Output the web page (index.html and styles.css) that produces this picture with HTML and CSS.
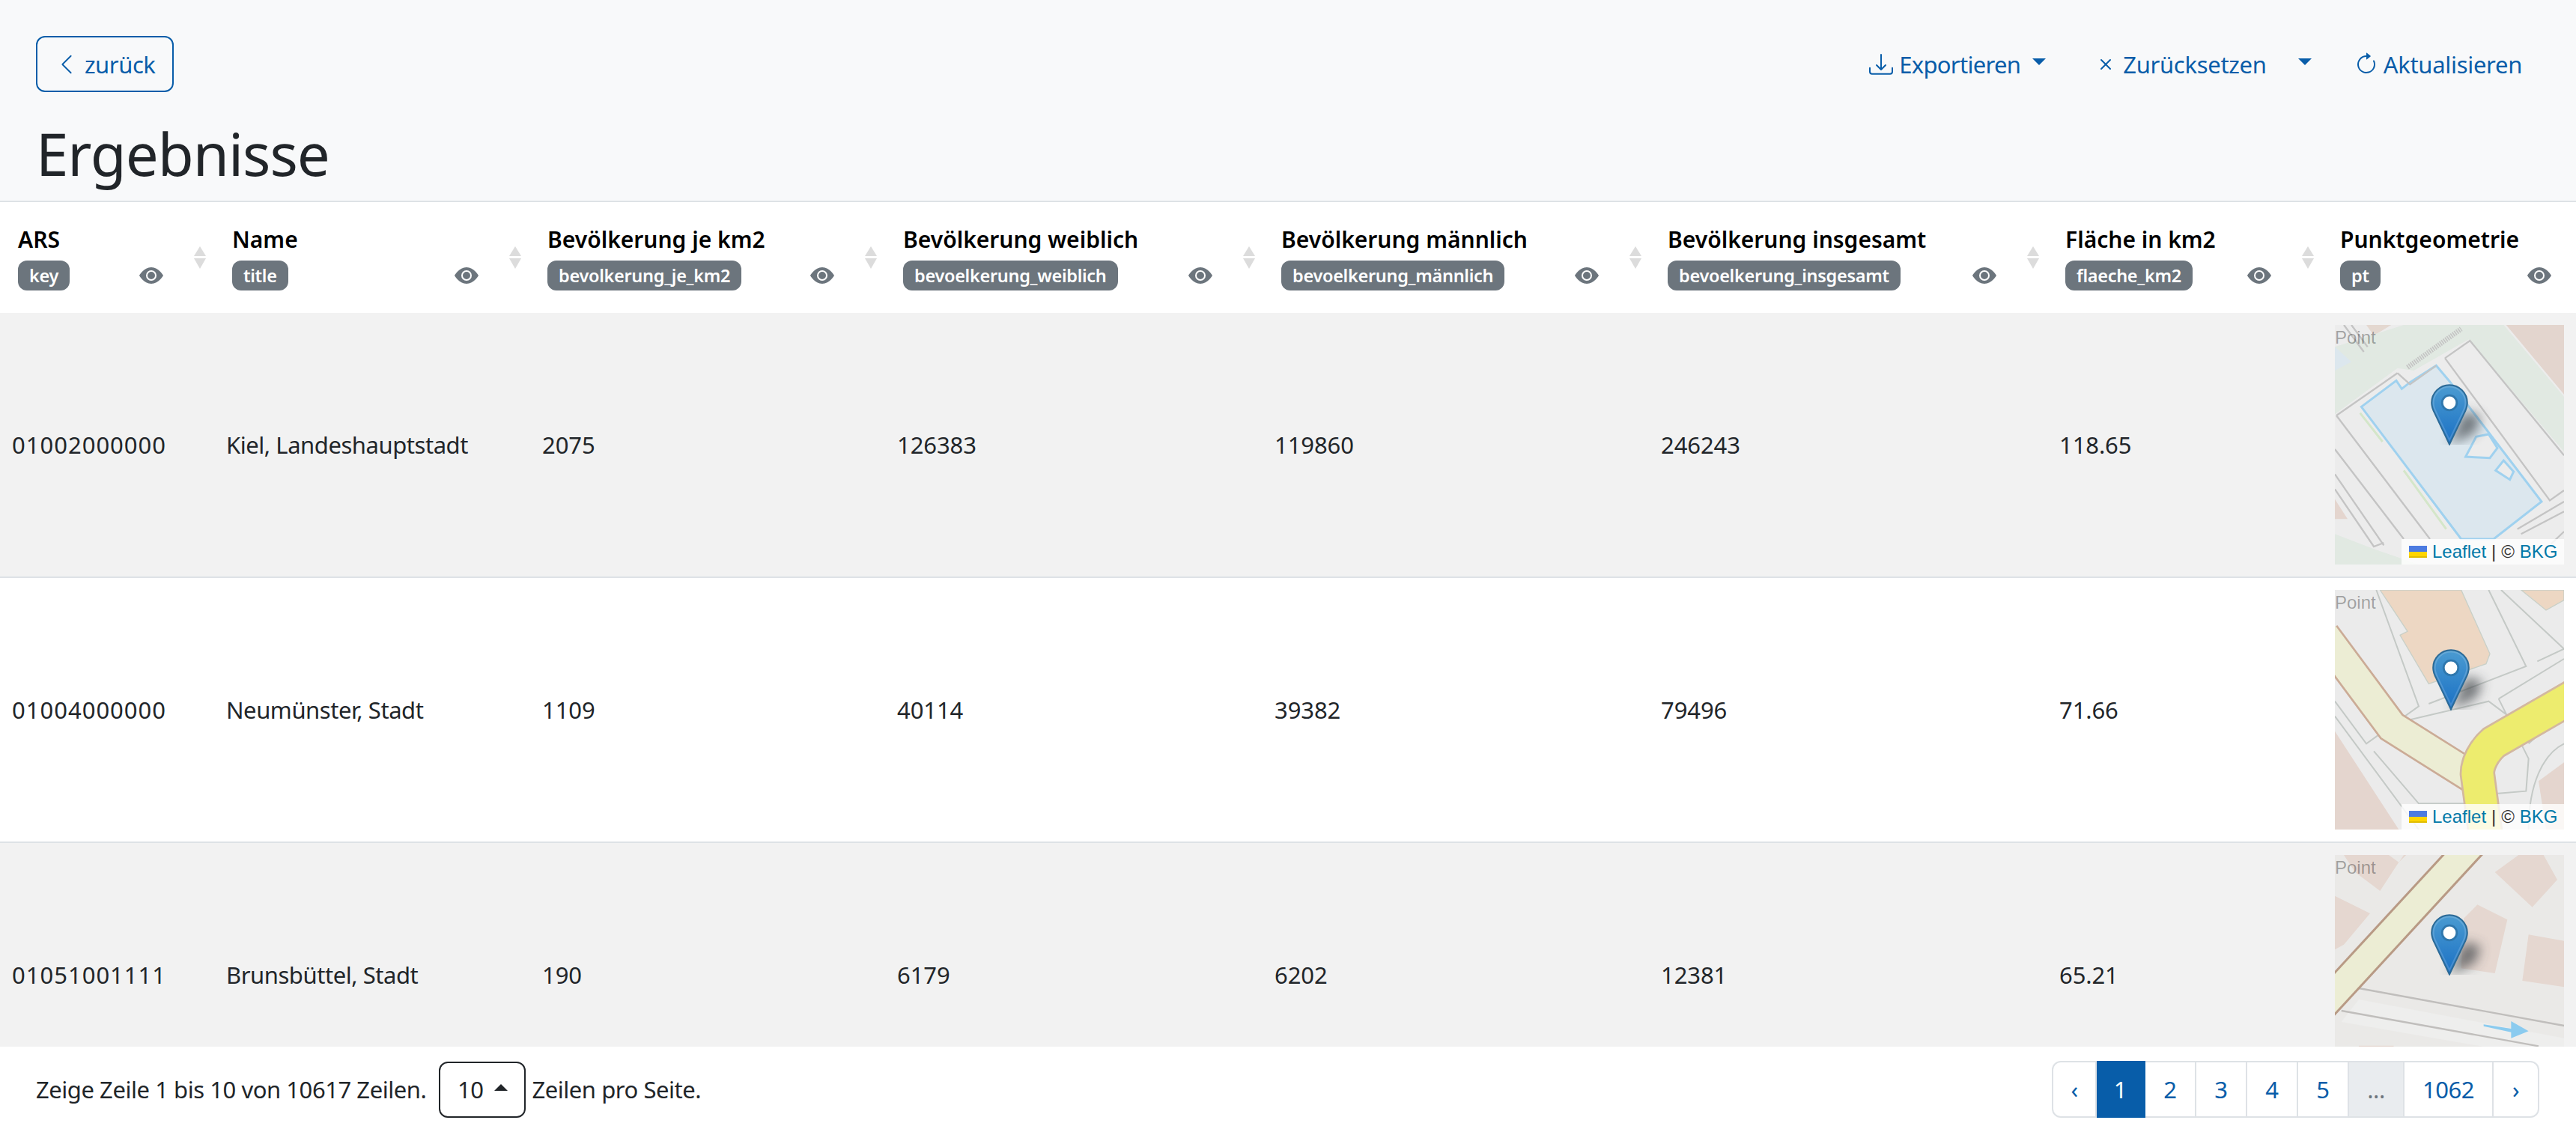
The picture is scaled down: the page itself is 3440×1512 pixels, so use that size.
FILE: index.html
```html
<!DOCTYPE html>
<html lang="de">
<head>
    <meta charset="UTF-8">
    <meta name="viewport" content="width=device-width, initial-scale=1.0">
    <title>Ergebnisse</title>
    <link rel="stylesheet" href="styles.css">
</head>
<body>
    <svg class="defs" width="0" height="0">
        <defs>
            <symbol id="i-eye" viewBox="0 0 16 16">
                <path d="M10.5 8a2.5 2.5 0 1 1-5 0 2.5 2.5 0 0 1 5 0z"/>
                <path d="M0 8s3-5.5 8-5.5S16 8 16 8s-3 5.5-8 5.5S0 8 0 8zm8 3.5a3.5 3.5 0 1 0 0-7 3.5 3.5 0 0 0 0 7z"/>
            </symbol>
            <symbol id="i-sort" viewBox="0 0 16 30">
                <path d="M8 0l8 13H0z" fill="#dcdcdc"/>
                <path d="M8 30L0 16h16z" fill="#dcdcdc"/>
            </symbol>
            <symbol id="i-chevron" viewBox="0 0 16 16">
                <path d="M11.354 1.646a.5.5 0 0 1 0 .708L5.707 8l5.647 5.646a.5.5 0 0 1-.708.708l-6-6a.5.5 0 0 1 0-.708l6-6a.5.5 0 0 1 .708 0z"/>
            </symbol>
            <symbol id="i-download" viewBox="0 0 16 16">
                <path d="M.5 9.9a.5.5 0 0 1 .5.5v2.5a1 1 0 0 0 1 1h12a1 1 0 0 0 1-1v-2.5a.5.5 0 0 1 1 0v2.5a2 2 0 0 1-2 2H2a2 2 0 0 1-2-2v-2.5a.5.5 0 0 1 .5-.5z"/>
                <path d="M7.646 11.854a.5.5 0 0 0 .708 0l3-3a.5.5 0 0 0-.708-.708L8.5 10.293V1.5a.5.5 0 0 0-1 0v8.793L5.354 8.146a.5.5 0 1 0-.708.708l3 3z"/>
            </symbol>
            <symbol id="i-x" viewBox="0 0 16 16">
                <path d="M4.646 4.646a.5.5 0 0 1 .708 0L8 7.293l2.646-2.647a.5.5 0 0 1 .708.708L8.707 8l2.647 2.646a.5.5 0 0 1-.708.708L8 8.707l-2.646 2.647a.5.5 0 0 1-.708-.708L7.293 8 4.646 5.354a.5.5 0 0 1 0-.708z"/>
            </symbol>
            <symbol id="i-refresh" viewBox="0 0 16 16">
                <path d="M8 3a5 5 0 1 0 4.546 2.914.5.5 0 0 1 .908-.417A6 6 0 1 1 8 2v1z"/>
                <path d="M8 4.466V.534a.25.25 0 0 1 .41-.192l2.36 1.966c.12.1.12.284 0 .384L8.41 4.658A.25.25 0 0 1 8 4.466z"/>
            </symbol>
            <symbol id="i-flag" viewBox="0 0 12 8">
                <path fill="#4C7BE1" d="M0 0h12v4H0z"/>
                <path fill="#FFD500" d="M0 4h12v3H0z"/>
                <path fill="#E0BC00" d="M0 7h12v1H0z"/>
            </symbol>
            <linearGradient id="pin-fill" x1="0" y1="0" x2="0" y2="1">
                <stop offset="0" stop-color="#4b9bd1"/>
                <stop offset="1" stop-color="#1a70c4"/>
            </linearGradient>
            <symbol id="i-pin" viewBox="0 0 25 41">
                <path d="M12.5.6C5.9.6.6 5.9.6 12.5c0 2.6 1 5.1 2.2 7.3L12.5 40.3l9.7-20.5c1.2-2.2 2.2-4.7 2.2-7.3C24.4 5.9 19.1.6 12.5.6z" fill="url(#pin-fill)" stroke="#2c6a96" stroke-width="1"/>
                <path d="M12.5 1.8C6.6 1.8 1.8 6.600 1.8 12.5c0 2.3.9 4.5 2 6.7l8.7 18.2 8.7-18.2c1.100-2.200 2-4.400 2-6.700 0-5.900-4.800-10.700-10.700-10.700z" fill="none" stroke="#fff" stroke-opacity=".16" stroke-width="1"/>
                <circle cx="12.5" cy="12.5" r="5.6" fill="#2f77ad"/>
                <circle cx="12.5" cy="12.5" r="4.2" fill="#fff"/>
            </symbol>
            <symbol id="i-shadow" viewBox="0 0 82 82">
                <path d="M24 82L44 38 66 44 58 66z" fill="#3c4246" filter="url(#shadow-blur)"/>
            </symbol>
            <filter id="tile-blur"><feGaussianBlur stdDeviation="1.8"/></filter>
            <filter id="shadow-blur" x="-40%" y="-40%" width="180%" height="180%"><feGaussianBlur stdDeviation="8"/></filter>
        </defs>
    </svg>

    <header class="topbar">
        <div class="topbar-row">
            <button class="btn-back"><svg class="icon icon-chevron"><use href="#i-chevron"/></svg>zurück</button>
            <div class="toolbar">
                <span class="tool tool-export"><svg class="icon"><use href="#i-download"/></svg>Exportieren<i class="caret caret-export"></i></span>
                <span class="tool tool-reset"><svg class="icon"><use href="#i-x"/></svg>Zurücksetzen</span>
                <i class="caret caret-reset"></i>
                <span class="tool tool-refresh"><svg class="icon"><use href="#i-refresh"/></svg>Aktualisieren</span>
            </div>
        </div>
        <h1>Ergebnisse</h1>
    </header>

    <main class="results">
        <div class="thead">
            <div class="th">
                <div class="th-main"><div class="th-label">ARS</div><div class="th-sub"><span class="badge">key</span><svg class="eye"><use href="#i-eye"/></svg></div></div>
                <svg class="sort"><use href="#i-sort"/></svg>
            </div>
            <div class="th">
                <div class="th-main"><div class="th-label">Name</div><div class="th-sub"><span class="badge">title</span><svg class="eye"><use href="#i-eye"/></svg></div></div>
                <svg class="sort"><use href="#i-sort"/></svg>
            </div>
            <div class="th">
                <div class="th-main"><div class="th-label">Bevölkerung je km2</div><div class="th-sub"><span class="badge">bevolkerung_je_km2</span><svg class="eye"><use href="#i-eye"/></svg></div></div>
                <svg class="sort"><use href="#i-sort"/></svg>
            </div>
            <div class="th">
                <div class="th-main"><div class="th-label">Bevölkerung weiblich</div><div class="th-sub"><span class="badge">bevoelkerung_weiblich</span><svg class="eye"><use href="#i-eye"/></svg></div></div>
                <svg class="sort"><use href="#i-sort"/></svg>
            </div>
            <div class="th">
                <div class="th-main"><div class="th-label">Bevölkerung männlich</div><div class="th-sub"><span class="badge">bevoelkerung_männlich</span><svg class="eye"><use href="#i-eye"/></svg></div></div>
                <svg class="sort"><use href="#i-sort"/></svg>
            </div>
            <div class="th">
                <div class="th-main"><div class="th-label">Bevölkerung insgesamt</div><div class="th-sub"><span class="badge">bevoelkerung_insgesamt</span><svg class="eye"><use href="#i-eye"/></svg></div></div>
                <svg class="sort"><use href="#i-sort"/></svg>
            </div>
            <div class="th">
                <div class="th-main"><div class="th-label">Fläche in km2</div><div class="th-sub"><span class="badge">flaeche_km2</span><svg class="eye"><use href="#i-eye"/></svg></div></div>
                <svg class="sort"><use href="#i-sort"/></svg>
            </div>
            <div class="th th-last">
                <div class="th-main"><div class="th-label">Punktgeometrie</div><div class="th-sub"><span class="badge">pt</span><svg class="eye"><use href="#i-eye"/></svg></div></div>
            </div>
        </div>

        <div class="tr tr-odd">
            <div class="td td-id">01002000000</div>
            <div class="td">Kiel, Landeshauptstadt</div>
            <div class="td td-num">2075</div>
            <div class="td td-num">126383</div>
            <div class="td td-num">119860</div>
            <div class="td td-num">246243</div>
            <div class="td td-num">118.65</div>
            <div class="td">
                <div class="map">
                    <svg class="tile" viewBox="84 42 918 960">
                        <rect x="84" y="42" width="918" height="960" fill="#ececec"/>
                        <g filter="url(#tile-blur)">
                            <path d="M770 42H1002V320z" fill="#e3d5ce"/>
                            <path d="M210 42H310L240 85z" fill="#e4d8d0"/>
                            <path d="M84 130L360 42H760L1002 330V550L620 100 400 225 335 215 84 400z" fill="#e1e9e2"/>
                            <path d="M84 130L150 190 84 225z" fill="#dce7ee"/>
                            <path d="M84 880L240 940 420 1002H84z" fill="#e1e9e2"/>
                            <path d="M84 740L135 820 84 820z" fill="#e4d5ce"/>
                            <path d="M190 370L330 265 352 298 385 272 490 205 545 270 912 750 720 900 590 900z" fill="#dce7ee" stroke="#9fd1ef" stroke-width="9"/>
                            <path d="M185 395L275 510M360 625L530 860" fill="none" stroke="#d4e6c9" stroke-width="9"/>
                            <path d="M608 570L650 490 700 480 735 535 705 575z M728 625L760 585 800 630 785 662z" fill="#ececec" stroke="#9fd1ef" stroke-width="9"/>
                            <path d="M90 405L335 235M335 235L385 280 490 205M90 405L465 900M84 540L360 900M84 640L280 925M84 700L240 930 280 915M525 175L625 105 1002 565M525 175L945 745 1002 705M815 860L1002 750M830 880L1002 790M1002 870L950 920" fill="none" stroke="#c4c4c4" stroke-width="7"/>
                            <path d="M375 212L590 58" fill="none" stroke="#c4c4c4" stroke-width="20" stroke-dasharray="5 4"/>
                            <path d="M120 42L200 150M150 42L215 130" fill="none" stroke="#c4c4c4" stroke-width="7"/>
                        </g>
                    </svg>
                    <span class="map-label">Point</span>
                    <svg class="pin-shadow"><use href="#i-shadow"/></svg>
                    <svg class="pin"><use href="#i-pin"/></svg>
                    <div class="attribution"><svg class="flag"><use href="#i-flag"/></svg><a>Leaflet</a><span class="sep">|</span>© <a>BKG</a></div>
                </div>
            </div>
        </div>

        <div class="tr">
            <div class="td td-id">01004000000</div>
            <div class="td">Neumünster, Stadt</div>
            <div class="td td-num">1109</div>
            <div class="td td-num">40114</div>
            <div class="td td-num">39382</div>
            <div class="td td-num">79496</div>
            <div class="td td-num">71.66</div>
            <div class="td">
                <div class="map map-alt">
                    <svg class="tile" viewBox="84 24 918 960">
                        <rect x="84" y="24" width="918" height="960" fill="#ebebeb"/>
                        <g filter="url(#tile-blur)">
                            <path d="M84 590L340 984H84z" fill="#e4d5ce"/>
                            <path d="M900 790L1002 715V984H930z" fill="#e4d5ce"/>
                            <path d="M265 24H590L705 280 690 320 460 400 345 205 375 190z" fill="#edd7c3" stroke="#c9d0c8" stroke-width="4"/>
                            <path d="M830 24H1002V65L930 105z" fill="#edd7c3" stroke="#c9d0c8" stroke-width="4"/>
                            <path d="M84 470L210 640 420 490 250 24M460 480L850 330 700 24M895 310L1002 260 750 24M240 670L420 880 600 880M740 460L860 700 850 830 730 840M360 550L700 470 780 530M740 460L1002 300M84 530L420 984M860 640L950 560 1002 500M860 984C860 800 920 680 1002 640" fill="none" stroke="#c4c9c6" stroke-width="6"/>
                            <path d="M40 205L312 572 640 778" fill="none" stroke="#cbab96" stroke-width="134"/>
                            <path d="M40 205L312 572 640 778" fill="none" stroke="#ecedd4" stroke-width="118"/>
                            <path d="M1040 450L720 635C680 670 655 720 655 760L690 1020" fill="none" stroke="#d3b89f" stroke-width="142"/>
                            <path d="M1040 450L720 635C680 670 655 720 655 760L690 1020" fill="none" stroke="#edec6e" stroke-width="126"/>
                        </g>
                    </svg>
                    <span class="map-label">Point</span>
                    <svg class="pin-shadow"><use href="#i-shadow"/></svg>
                    <svg class="pin"><use href="#i-pin"/></svg>
                    <div class="attribution"><svg class="flag"><use href="#i-flag"/></svg><a>Leaflet</a><span class="sep">|</span>© <a>BKG</a></div>
                </div>
            </div>
        </div>

        <div class="tr tr-odd">
            <div class="td td-id">01051001111</div>
            <div class="td">Brunsbüttel, Stadt</div>
            <div class="td td-num">190</div>
            <div class="td td-num">6179</div>
            <div class="td td-num">6202</div>
            <div class="td td-num">12381</div>
            <div class="td td-num">65.21</div>
            <div class="td">
                <div class="map">
                    <svg class="tile" viewBox="84 66 918 960">
                        <rect x="84" y="66" width="918" height="960" fill="#eae9e7"/>
                        <g filter="url(#tile-blur)">
                            <path d="M120 66H360L330 110 265 210 165 135z M300 66L340 95 370 66z" fill="#e5d7d0"/>
                            <path d="M725 135L820 66H920L975 165 875 275z" fill="#e5d7d0"/>
                            <path d="M600 320L655 265 775 325 725 540 590 520z" fill="#e5d7d0"/>
                            <path d="M860 385L1002 410V595L835 570z" fill="#e5d7d0"/>
                            <path d="M84 230L225 300 120 425 84 445z" fill="#e5d7d0"/>
                            <path d="M180 830L320 830 300 900H170z" fill="#e5d7d0"/>
                            <path d="M180 645L1002 800 1002 890 110 735z" fill="#eeeeed"/>
                            <path d="M180 600L1002 750M110 690L900 832" fill="none" stroke="#c0bebc" stroke-width="7"/>
                            <path d="M40 668L640 17" fill="none" stroke="#b89a85" stroke-width="122"/>
                            <path d="M40 668L640 17" fill="none" stroke="#ecedd4" stroke-width="104"/>
                            <path d="M680 745L790 762V732L860 772 790 800V776L680 752z" fill="#8bcbef"/>
                        </g>
                    </svg>
                    <span class="map-label">Point</span>
                    <svg class="pin-shadow"><use href="#i-shadow"/></svg>
                    <svg class="pin"><use href="#i-pin"/></svg>
                </div>
            </div>
        </div>
    </main>

    <footer class="pager-bar">
        <div class="pager-info">
            <span>Zeige Zeile 1 bis 10 von 10617 Zeilen.</span>
            <span class="page-size">10<i class="caret-up"></i></span>
            <span>Zeilen pro Seite.</span>
        </div>
        <nav class="pagination">
            <a class="page page-prev">‹</a>
            <a class="page page-on">1</a>
            <a class="page">2</a>
            <a class="page">3</a>
            <a class="page">4</a>
            <a class="page">5</a>
            <a class="page page-gap">...</a>
            <a class="page page-wide">1062</a>
            <a class="page page-next">›</a>
        </nav>
    </footer>
</body>
</html>
```

FILE: styles.css
```css
* {
    box-sizing: border-box;
}
html, body {
    height: 100%;
}
body {
    margin: 0;
    height: 100vh;
    display: flex;
    flex-direction: column;
    overflow: hidden;
    background: #fff;
    color: #212529;
    font-family: "Noto Sans", "Open Sans", sans-serif;
    font-size: 31px;
    letter-spacing: -0.45px;
}
.defs {
    position: absolute;
}
.icon {
    width: 32px;
    height: 32px;
    fill: currentColor;
    flex: none;
}

/* top */
.topbar {
    height: 270px;
    flex: none;
    padding: 48px 48px 0;
    background: #f8f9fa;
    border-bottom: 2px solid #dee2e6;
}
.topbar-row {
    display: flex;
    justify-content: space-between;
    align-items: flex-start;
}
.btn-back {
    display: flex;
    align-items: center;
    width: 184px;
    height: 75px;
    padding: 0 0 0 24px;
    background: transparent;
    border: 2px solid #085da9;
    border-radius: 12px;
    color: #085da9;
    font: inherit;
    letter-spacing: inherit;
}
.icon-chevron {
    width: 30px;
    height: 30px;
    margin-right: 9px;
}
.toolbar {
    display: flex;
    align-items: center;
    height: 75px;
    padding-right: 24px;
    color: #085da9;
    letter-spacing: -0.3px;
}
.tool {
    display: flex;
    align-items: center;
}
.tool-export {
    letter-spacing: -0.7px;
}
.tool-export .icon {
    margin-right: 8px;
}
.tool-reset {
    margin-left: 64px;
}
.tool-reset .icon {
    margin-right: 7px;
}
.tool-refresh {
    margin-left: 57px;
}
.tool-refresh .icon {
    margin-right: 7px;
}
.caret {
    display: block;
    width: 0;
    height: 0;
    border-left: 9px solid transparent;
    border-right: 9px solid transparent;
    border-top: 9px solid #085da9;
}
.caret-export {
    margin: -6px 0 0 16px;
}
.caret-reset {
    margin: -6px 0 0 42px;
}
h1 {
    margin: 35px 0 0;
    font-size: 78px;
    font-weight: 400;
    line-height: 94px;
    letter-spacing: -1px;
}

/* table */
.results {
    flex: 1;
    min-height: 0;
    overflow: hidden;
}
.thead {
    display: grid;
    grid-template-columns: 286px 421px 475px 505px 516px 531px 367px 339px;
    height: 148px;
}
.th {
    display: flex;
    align-items: center;
    gap: 41px;
    padding: 0 11px 0 24px;
}
.th-last {
    padding-right: 33px;
}
.th-main {
    flex: 1;
    min-width: 0;
}
.th-label {
    color: #000;
    font-size: 30px;
    font-weight: 600;
    letter-spacing: 0;
    line-height: 40px;
    white-space: nowrap;
}
.th-sub {
    display: flex;
    justify-content: space-between;
    align-items: center;
    margin-top: 8px;
}
.badge {
    height: 40px;
    padding: 0 15px;
    background: #6c757d;
    border-radius: 12px;
    color: #fff;
    font-size: 23.5px;
    font-weight: 600;
    letter-spacing: -0.3px;
    line-height: 41px;
    white-space: nowrap;
}
.eye {
    width: 32px;
    height: 32px;
    fill: #6c757d;
    flex: none;
}
.sort {
    width: 16px;
    height: 30px;
    flex: none;
}
.tr {
    display: grid;
    grid-template-columns: 286px 422px 474px 504px 516px 532px 368px 338px;
    height: 354px;
    align-items: center;
    border-bottom: 2px solid #dee2e6;
}
.tr-odd {
    background: #f2f2f2;
}
.td {
    padding: 0 16px;
    white-space: nowrap;
}
.td-id {
    letter-spacing: 1px;
}
.td-num {
    letter-spacing: -0.1px;
}

/* map cell */
.map {
    position: relative;
    width: 306px;
    height: 320px;
    overflow: hidden;
    font-family: "Liberation Sans", Arial, sans-serif;
    font-size: 24px;
    letter-spacing: 0;
}
.tile {
    display: block;
    width: 306px;
    height: 320px;
}
.map-label {
    position: absolute;
    left: 0;
    top: 3px;
    color: rgba(0, 0, 0, 0.33);
    line-height: 28px;
}
.pin {
    position: absolute;
    left: 128px;
    top: 79px;
    width: 50px;
    height: 82px;
}
.pin-shadow {
    position: absolute;
    left: 129px;
    top: 78px;
    width: 82px;
    height: 82px;
    opacity: 0.7;
}
.map-alt .pin, .map-alt .pin-shadow {
    margin-left: 2px;
}
.attribution {
    position: absolute;
    right: 0;
    bottom: 0;
    display: flex;
    align-items: center;
    width: 217px;
    height: 34px;
    padding-left: 10px;
    background: rgba(255, 255, 255, 0.8);
    color: #333;
    white-space: pre;
}
.attribution a {
    color: #0078a8;
}
.flag {
    width: 24px;
    height: 16px;
    margin-right: 7px;
}
.sep {
    margin: 0 7px;
}

/* footer */
.pager-bar {
    flex: none;
    height: 114px;
    display: flex;
    justify-content: space-between;
    align-items: center;
    padding: 0 49px 0 48px;
    background: #fff;
}
.pager-info {
    display: flex;
    align-items: center;
    gap: 17px;
}
.page-size {
    display: flex;
    align-items: center;
    justify-content: center;
    gap: 14px;
    width: 116px;
    height: 75px;
    margin-right: -9px;
    border: 2px solid #212529;
    border-radius: 12px;
}
.caret-up {
    display: block;
    width: 0;
    height: 0;
    margin-top: -6px;
    border-left: 9px solid transparent;
    border-right: 9px solid transparent;
    border-bottom: 9px solid #212529;
}
.pagination {
    display: flex;
    height: 76px;
    color: #085da9;
}
.page {
    display: flex;
    align-items: center;
    justify-content: center;
    width: 68px;
    border: 2px solid #dee2e6;
    border-left: 0;
}
.page-prev {
    width: 60px;
    border-left: 2px solid #dee2e6;
    border-radius: 12px 0 0 12px;
}
.page-next {
    width: 61px;
    border-radius: 0 12px 12px 0;
}
.page-on {
    width: 65px;
    background: #085da9;
    border-color: #085da9;
    color: #fff;
}
.page-gap {
    width: 74px;
    background: #e9ecef;
    color: #6c757d;
}
.page-wide {
    width: 119px;
}
```
